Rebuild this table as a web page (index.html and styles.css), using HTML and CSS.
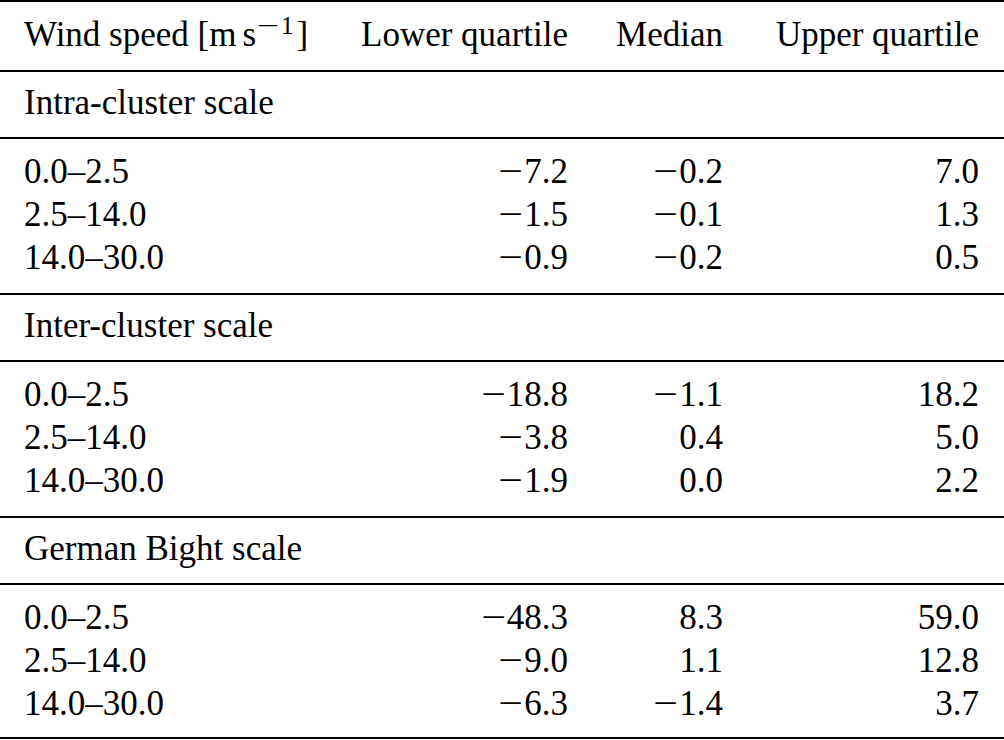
FILE: index.html
```html
<!DOCTYPE html>
<html lang="en">
<head>
<meta charset="utf-8">
<title>Wind speed quartiles</title>
<link rel="stylesheet" href="styles.css">
</head>
<body>
<div class="table">
  <div class="row head">
    <div class="c1">Wind speed [m<span class="thin"></span>s<sup class="sup"><span class="supm">−</span>1</sup>]</div>
    <div class="num">Lower quartile</div>
    <div class="num">Median</div>
    <div class="num">Upper quartile</div>
  </div>

  <div class="section">Intra-cluster scale</div>
  <div class="group">
    <div class="row"><div class="c1">0.0–2.5</div><div class="num"><span class="m">−</span>7.2</div><div class="num"><span class="m">−</span>0.2</div><div class="num">7.0</div></div>
    <div class="row"><div class="c1">2.5–14.0</div><div class="num"><span class="m">−</span>1.5</div><div class="num"><span class="m">−</span>0.1</div><div class="num">1.3</div></div>
    <div class="row"><div class="c1">14.0–30.0</div><div class="num"><span class="m">−</span>0.9</div><div class="num"><span class="m">−</span>0.2</div><div class="num">0.5</div></div>
  </div>

  <div class="section">Inter-cluster scale</div>
  <div class="group">
    <div class="row"><div class="c1">0.0–2.5</div><div class="num"><span class="m">−</span>18.8</div><div class="num"><span class="m">−</span>1.1</div><div class="num">18.2</div></div>
    <div class="row"><div class="c1">2.5–14.0</div><div class="num"><span class="m">−</span>3.8</div><div class="num">0.4</div><div class="num">5.0</div></div>
    <div class="row"><div class="c1">14.0–30.0</div><div class="num"><span class="m">−</span>1.9</div><div class="num">0.0</div><div class="num">2.2</div></div>
  </div>

  <div class="section">German Bight scale</div>
  <div class="group last">
    <div class="row"><div class="c1">0.0–2.5</div><div class="num"><span class="m">−</span>48.3</div><div class="num">8.3</div><div class="num">59.0</div></div>
    <div class="row"><div class="c1">2.5–14.0</div><div class="num"><span class="m">−</span>9.0</div><div class="num">1.1</div><div class="num">12.8</div></div>
    <div class="row"><div class="c1">14.0–30.0</div><div class="num"><span class="m">−</span>6.3</div><div class="num"><span class="m">−</span>1.4</div><div class="num">3.7</div></div>
  </div>
</div>
</body>
</html>
```

FILE: styles.css
```css
html, body {
  margin: 0;
  padding: 0;
  background: #ffffff;
}

body {
  font-family: "Liberation Serif", "Times New Roman", serif;
  font-size: 35px;
  line-height: 43px;
  color: #000000;
}

.table {
  width: 1004px;
  border-top: 2px solid #000000;
}

.row {
  display: grid;
  grid-template-columns: 287px 209px 107px 1fr;
  column-gap: 48px;
  padding: 0 25px 0 24px;
  white-space: nowrap;
}

.head {
  padding-top: 11px;
  padding-bottom: 14px;
}

.num {
  text-align: right;
}

.thin {
  display: inline-block;
  width: 6px;
}

.sup {
  font-size: 25px;
  line-height: 0;
  vertical-align: 12px;
  margin-right: 3px;
}

.supm {
  display: inline-block;
  width: 22px;
  margin-left: 1px;
  margin-right: 2px;
  text-align: center;
  transform: scaleX(1.6);
}

.m {
  display: inline-block;
  width: 0.778em;
  text-align: center;
  transform: scaleX(1.25);
}

.section {
  border-top: 2px solid #000000;
  border-bottom: 2px solid #000000;
  padding: 9px 24px 13px;
}

.group {
  padding-top: 11px;
  padding-bottom: 14px;
}

.group.last {
  padding-bottom: 12px;
  border-bottom: 2px solid #000000;
}
```
